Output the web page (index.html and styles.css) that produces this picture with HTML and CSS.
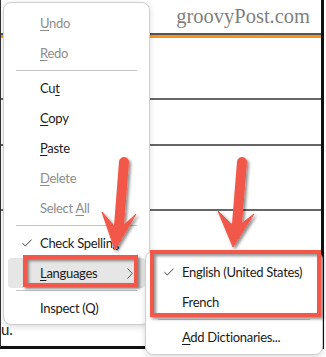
FILE: index.html
```html
<!DOCTYPE html>
<html lang="en">
<head>
  <meta charset="UTF-8" />
  <title>Languages menu</title>
  <link rel="stylesheet" href="styles.css">
</head>
<body>
  <div class="page">
    <header class="site-head"><span class="brand">groovyPost.com</span></header>
    <div class="rule"></div>
    <div class="row row-a"></div>
    <div class="row row-b"></div>
    <div class="row row-c"></div>
    <div class="row row-d"></div>
    <p class="tail">u.</p>
  </div>

  <div class="menu main-menu">
    <div class="item disabled"><span class="mark"></span><span class="label"><u>U</u>ndo</span></div>
    <div class="item disabled"><span class="mark"></span><span class="label"><u>R</u>edo</span></div>
    <div class="sep"></div>
    <div class="item"><span class="mark"></span><span class="label">Cu<u>t</u></span></div>
    <div class="item"><span class="mark"></span><span class="label"><u>C</u>opy</span></div>
    <div class="item"><span class="mark"></span><span class="label"><u>P</u>aste</span></div>
    <div class="item disabled"><span class="mark"></span><span class="label"><u>D</u>elete</span></div>
    <div class="item disabled"><span class="mark"></span><span class="label">Select <u>A</u>ll</span></div>
    <div class="sep"></div>
    <div class="item">
      <span class="mark"><svg width="10" height="8" viewBox="0 0 10 8"><path d="M0.5 4.2 L3.4 7 L9.5 0.6" fill="none" stroke="#444" stroke-width="1"/></svg></span>
      <span class="label">Check Spelling</span>
    </div>
    <div class="item active">
      <span class="mark"></span>
      <span class="label"><u>L</u>anguages</span>
      <svg class="chev" width="6" height="11" viewBox="0 0 6 11"><path d="M0.5 0.5 L5.3 5.5 L0.5 10.5" fill="none" stroke="#555" stroke-width="1"/></svg>
    </div>
    <div class="sep"></div>
    <div class="item"><span class="mark"></span><span class="label">Inspect (Q)</span></div>
  </div>

  <div class="menu sub-menu">
    <div class="item">
      <span class="mark"><svg width="10" height="8" viewBox="0 0 10 8"><path d="M0.5 4.2 L3.4 7 L9.5 0.6" fill="none" stroke="#444" stroke-width="1"/></svg></span>
      <span class="label">English (United States)</span>
    </div>
    <div class="item"><span class="mark"></span><span class="label">French</span></div>
    <div class="sep"></div>
    <div class="item"><span class="mark"></span><span class="label"><u>A</u>dd Dictionaries...</span></div>
  </div>

  <svg class="marks" width="326" height="357" viewBox="0 0 326 357">
    <defs>
      <filter id="shade" x="-20%" y="-20%" width="140%" height="140%">
        <feDropShadow dx="2" dy="2" stdDeviation="1.5" flood-color="#000" flood-opacity="0.45"/>
      </filter>
    </defs>
    <g filter="url(#shade)" fill="#f2584a" stroke="#f2584a">
      <line x1="124" y1="162" x2="119" y2="226" stroke-width="10" stroke-linecap="round"/>
      <polygon points="102,212 114,226 123,226 136,214 115,250" stroke-width="1" stroke-linejoin="round"/>
      <line x1="242" y1="162" x2="237" y2="224" stroke-width="10" stroke-linecap="round"/>
      <polygon points="218,211 231,224 241,224 254,214 233,247" stroke-width="1" stroke-linejoin="round"/>
      <rect x="25" y="257" width="111" height="28" fill="none" stroke-width="4"/>
      <rect x="152" y="252" width="167" height="63" fill="none" stroke-width="4"/>
    </g>
  </svg>
</body>
</html>
```

FILE: styles.css
```css
body {
  margin: 0;
  width: 326px;
  height: 357px;
  position: relative;
  overflow: hidden;
  background: #fff;
  font-family: Lato, "Noto Sans", sans-serif;
}
.page {
  width: 324px;
  height: 349px;
  box-sizing: border-box;
  border-left: 1px solid #333;
  border-right: 3px solid #111;
  border-bottom: 3px solid #111;
}
.site-head {
  height: 33px;
  display: flex;
  align-items: center;
  justify-content: flex-end;
  padding-right: 11px;
}
.brand {
  font-family: "Liberation Serif", serif;
  font-size: 20.5px;
  color: #808080;
}
.rule {
  height: 3px;
  border-top: 2px solid #555;
  background: #f7941d;
}
.row {
  border-bottom: 2px solid #666;
}
.row-a { height: 60px; }
.row-b { height: 44px; }
.row-c { height: 63px; }
.row-d { height: 110px; border-bottom: none; }
.tail {
  margin: 0;
  font-size: 15px;
  color: #222;
  line-height: 16px;
}

.menu {
  position: absolute;
  background: #fff;
  border: 1px solid #cfcfcf;
  border-radius: 8px;
  box-shadow: 0 2px 6px rgba(0, 0, 0, 0.14);
  box-sizing: border-box;
  font-size: 13px;
  letter-spacing: -0.3px;
  color: #1b1b1b;
  white-space: nowrap;
}
.main-menu {
  left: 3px;
  top: 2px;
  width: 147px;
  padding: 5px 0 1px;
}
.sub-menu {
  left: 145px;
  top: 251px;
  width: 178px;
  padding: 5px 0 2px;
}
.item {
  height: 30px;
  margin: 0 4px;
  padding: 0 12px;
  display: flex;
  align-items: center;
  border-radius: 4px;
}
.item.disabled {
  color: #8c8c8c;
}
.item.active {
  background: #e6e6e6;
}
.mark {
  width: 20px;
  flex: none;
  display: flex;
  align-items: center;
  padding-left: 2px;
  box-sizing: border-box;
}
.label u {
  text-underline-offset: 2px;
}
.chev {
  margin-left: auto;
}
.sep {
  height: 5px;
  margin: 0 12px;
  display: flex;
  align-items: center;
}
.sep::before {
  content: "";
  flex: 1;
  height: 1px;
  background: #c4c4c4;
}
.marks {
  position: absolute;
  left: 0;
  top: 0;
  pointer-events: none;
}
```
